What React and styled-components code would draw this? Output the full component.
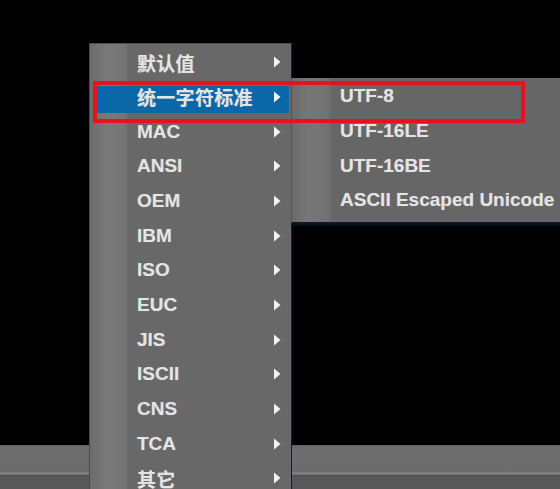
import styled, { createGlobalStyle } from "styled-components";

const GlobalStyle = createGlobalStyle`
  html, body {
    margin: 0;
    padding: 0;
    background: #000;
  }
  body {
    font-family: "Liberation Sans", "Noto Sans CJK SC", sans-serif;
  }
`;

const encodings = [
  { label: "默认值", cjk: true },
  { label: "统一字符标准", cjk: true, active: true },
  { label: "MAC" },
  { label: "ANSI" },
  { label: "OEM" },
  { label: "IBM" },
  { label: "ISO" },
  { label: "EUC" },
  { label: "JIS" },
  { label: "ISCII" },
  { label: "CNS" },
  { label: "TCA" },
  { label: "其它", cjk: true },
];

const unicodeItems = ["UTF-8", "UTF-16LE", "UTF-16BE", "ASCII Escaped Unicode"];

const Arrow = () => (
  <ArrowIcon width="8" height="12" viewBox="0 0 8 12">
    <path d="M1 0.5 L7.5 6 L1 11.5 Z" fill="#f2f2f2" />
  </ArrowIcon>
);

const App = () => {
  return (
    <>
      <GlobalStyle />
      <Screen>
        <Canvas />
        <StatusBar>
          <BarTop />
          <BarLine />
          <BarBottom />
        </StatusBar>

        <Menu>
          {encodings.map((item) => (
            <Item key={item.label} $active={item.active}>
              <Label $cjk={item.cjk}>{item.label}</Label>
              <Arrow />
            </Item>
          ))}
        </Menu>

        <SubMenu>
          {unicodeItems.map((label) => (
            <SubItem key={label}>
              <Label>{label}</Label>
            </SubItem>
          ))}
        </SubMenu>

        <Marker />
      </Screen>
    </>
  );
};

export default App;

const Screen = styled.div`
  position: relative;
  width: 560px;
  height: 489px;
  overflow: hidden;
  display: flex;
  flex-direction: column;
  background: #000;
`;

const Canvas = styled.div`
  flex: 1;
  background: #000;
`;

const StatusBar = styled.div`
  height: 44px;
  display: flex;
  flex-direction: column;
`;

const BarTop = styled.div`
  height: 27px;
  background: linear-gradient(#5e5e5e 0, #6e6e6e 2px, #6c6c6c 100%);
`;

const BarLine = styled.div`
  height: 3px;
  background: #7d7d7d;
  border-bottom: 1px solid #4a4a4a;
`;

const BarBottom = styled.div`
  flex: 1;
  background: #585858;
`;

const Menu = styled.div`
  position: absolute;
  left: 89px;
  top: 43px;
  width: 201px;
  padding-top: 1px;
  background: linear-gradient(
    to right,
    #6c6c6c 0,
    #7a7a7a 18px,
    #747474 36px,
    #686868 38px,
    #686868 100%
  );
  border: 1px solid #4c4c4c;
  border-right-color: #0c2236;
  box-sizing: content-box;
`;

const Item = styled.div`
  height: 34.67px;
  display: flex;
  align-items: center;
  justify-content: space-between;
  padding: 0 8px 0 42px;
  margin: 0 2px 0 5px;
  box-sizing: border-box;
  background: ${(p) =>
    p.$active
      ? "linear-gradient(transparent 0 6px, #0b68a8 6px calc(100% - 1px), transparent calc(100% - 1px))"
      : "transparent"};
`;

const SubMenu = styled.div`
  position: absolute;
  left: 291px;
  top: 78px;
  width: 300px;
  padding: 1px 0 4px;
  background: linear-gradient(
    to right,
    #6a6a6a 0,
    #777 16px,
    #727272 36px,
    #666 40px,
    #666 100%
  );
  border-left: 1px solid #545454;
  border-bottom: 2px solid #0a1826;
  box-shadow: 0 2px 0 #06101a;
`;

const SubItem = styled.div`
  height: 34.67px;
  display: flex;
  align-items: center;
  padding-left: 48px;
`;

const Label = styled.span`
  color: #e4e4e4;
  font-weight: bold;
  font-size: 19px;
  font-family: ${(p) =>
    p.$cjk
      ? '"Noto Sans CJK SC", sans-serif'
      : '"Liberation Sans", "Noto Sans CJK SC", sans-serif'};
  letter-spacing: ${(p) => (p.$cjk ? "0.3px" : "0")};
  text-shadow: 0 0 1px rgba(220, 220, 220, 0.35);
  white-space: nowrap;
`;

const ArrowIcon = styled.svg`
  display: block;
  flex-shrink: 0;
`;

const Marker = styled.div`
  position: absolute;
  left: 93px;
  top: 81px;
  width: 432px;
  height: 42px;
  box-sizing: border-box;
  border: 4px solid #e8111c;
  pointer-events: none;
`;
